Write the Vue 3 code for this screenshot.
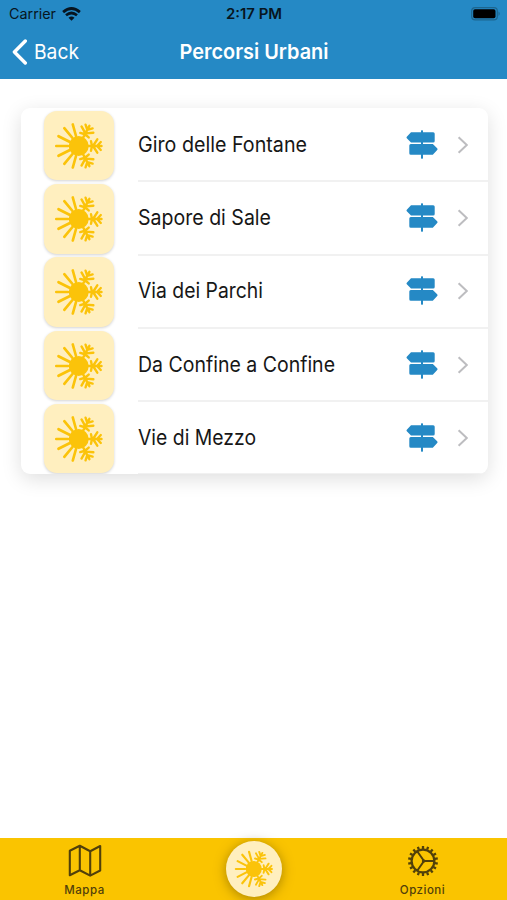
<script setup>
import { h } from 'vue'

const routes = [
  { name: 'Giro delle Fontane', width: 169 },
  { name: 'Sapore di Sale', width: 133 },
  { name: 'Via dei Parchi', width: 125 },
  { name: 'Da Confine a Confine', width: 197 },
  { name: 'Vie di Mezzo', width: 118 }
]

const branch = 'M43 35H57.5M49 35L53.3 28.3M49 35L53.3 41.7M48 35L47 30.2M48 35L47 39.8M53 35L56.8 31M53 35L56.8 39'

// Half sun, half snowflake emblem
const SunSnow = () =>
  h('svg', { viewBox: '0 0 70 70', fill: 'none', stroke: '#fbc30a', 'stroke-linecap': 'round' }, [
    h('circle', { cx: 34.7, cy: 35, r: 10, fill: '#fbc30a', stroke: 'none' }),
    h('path', {
      'stroke-width': 2.7,
      d: 'M12.3 35H24M14.5 25.2L25.5 30.8M20.3 17.2L28.5 27M28.8 13.5L32 25M14.5 44.8L25.5 39.2M20.3 52.8L28.5 43M28.8 56.5L32 45'
    }),
    ...[-62, 0, 62].map((a) =>
      h('path', { d: branch, 'stroke-width': 2.4, transform: `rotate(${a} 34.7 35)` })
    )
  ])

const teeth = Array.from({ length: 18 }, (_, i) => i * 20)
</script>

<template>
  <div class="screen">
    <header>
      <div class="status">
        <div class="carrier">
          <svg class="small" width="48" height="18"><text x="0" y="13.7" textLength="47" lengthAdjust="spacingAndGlyphs">Carrier</text></svg>
          <svg width="19" height="14" viewBox="0 0 19 14" fill="none" stroke="#071520">
            <path d="M1.1 5.1Q9.5-2 17.9 5.1" stroke-width="2.8" />
            <path d="M4 8.3Q9.5 3.7 15 8.3" stroke-width="2.7" />
            <path d="M6.5 10.7Q9.5 8.2 12.5 10.7L9.5 13.8Z" fill="#071520" stroke="none" />
          </svg>
        </div>
        <svg class="small time" width="56" height="18"><text x="0" y="13.7" textLength="56" lengthAdjust="spacingAndGlyphs">2:17 PM</text></svg>
        <svg class="battery" width="30" height="14" viewBox="0 0 30 14">
          <rect x=".7" y=".7" width="25.6" height="12.2" rx="3.4" fill="none" stroke="#1d668f" stroke-width="1.2" />
          <rect x="2.2" y="2.3" width="22.3" height="9" rx="1.8" fill="#000" />
          <path d="M27.5 4.6Q30 6.8 27.5 9Z" fill="#1d668f" />
        </svg>
      </div>
      <nav>
        <div class="back">
          <svg width="16" height="26" viewBox="0 0 16 26" fill="none" stroke="#fff" stroke-width="3.4" stroke-linecap="round" stroke-linejoin="round">
            <path d="M13.3 2L2.4 13L13.3 24" />
          </svg>
          <svg class="label" width="48" height="32"><text x="0" y="23.2" textLength="45" lengthAdjust="spacingAndGlyphs">Back</text></svg>
        </div>
        <svg class="title" width="152" height="32"><text x="1.5" y="23.2" textLength="149" lengthAdjust="spacingAndGlyphs">Percorsi Urbani</text></svg>
      </nav>
    </header>

    <main>
      <ul>
        <li v-for="r in routes" :key="r.name">
          <div class="tile"><SunSnow /></div>
          <div class="row">
            <svg class="name" width="230" height="30"><text x="0" y="22.3" :textLength="r.width" lengthAdjust="spacingAndGlyphs">{{ r.name }}</text></svg>
            <svg class="sign" width="32" height="30" viewBox="0 0 32 30" fill="#2589c5">
              <path d="M15 .5Q16 0 17 .5V2.3H27.2Q28.7 2.3 28.7 3.8V11.1Q28.7 12.6 27.2 12.6H17V14.1H26.8L31.2 18.3Q32 19.2 31.2 20.1L26.8 24.8H17V28.2Q16 29.4 15 28.2V24.8H4.8Q3.3 24.8 3.3 23.3V15.6Q3.3 14.1 4.8 14.1H15V12.6H5L.8 8.3Q.1 7.5 .8 6.7L5 2.3H15Z" />
            </svg>
            <svg class="chevron" width="12" height="18" viewBox="0 0 12 18" fill="none" stroke="#bdbdc0" stroke-width="2">
              <path d="M1.6 1.2L9.8 9L1.6 16.8" />
            </svg>
          </div>
        </li>
      </ul>
    </main>

    <footer>
      <div class="tab">
        <svg width="34" height="34" viewBox="0 0 34 34" fill="none" stroke="#51400a" stroke-width="2.1" stroke-linejoin="round">
          <path d="M1.8 6.8L11.8 1.8L22.2 7.2L32.2 2V26.5L22.2 31.6L11.8 26.2L1.8 31.2ZM11.8 1.8V26.2M22.2 7.2V31.6" />
        </svg>
        <span>Mappa</span>
      </div>
      <div class="home"><SunSnow /></div>
      <div class="tab">
        <svg width="34" height="34" viewBox="-17 -17 34 34" fill="none" stroke="#51400a">
          <circle r="11.4" stroke-width="2.2" />
          <path v-for="a in teeth" :key="a" d="M0-12V-15" stroke-width="2.3" :transform="`rotate(${a})`" />
          <path d="M1 0H11M1 0L-5.8-9.8M1 0L-5.8 9.8" stroke-width="2" />
          <circle cx=".6" r="1.8" fill="#51400a" stroke="none" />
        </svg>
        <span>Opzioni</span>
      </div>
    </footer>
  </div>
</template>

<style>
body {
  margin: 0;
  background: #fff;
}
</style>

<style scoped>
.screen {
  display: flex;
  flex-direction: column;
  width: 507px;
  height: 900px;
  overflow: hidden;
  background: #fff;
  font-family: Inter, "Liberation Sans", sans-serif;
}
svg {
  display: block;
  flex: none;
}
header {
  height: 79px;
  background: #2589c5;
  color: #071520;
}
.status {
  display: grid;
  grid-template-columns: 1fr auto 1fr;
  align-items: center;
  height: 27px;
  padding: 0 6px 0 9px;
}
.small text {
  fill: #071520;
  font-size: 14px;
}
.time text {
  font-weight: 600;
}
.time {
  margin-right: 3px;
}
.carrier {
  display: flex;
  align-items: center;
  gap: 5px;
}
.battery {
  justify-self: end;
}
nav {
  display: grid;
  grid-template-columns: 1fr auto 1fr;
  align-items: center;
  height: 50px;
  padding: 0 12px;
}
.back {
  display: flex;
  align-items: center;
  gap: 5.5px;
}
.label text,
.title text {
  fill: #fff;
  font-size: 20.5px;
}
.title text {
  font-weight: 600;
}
main {
  flex: 1;
  padding: 29px 19px 0 20.5px;
}
ul {
  list-style: none;
  margin: 0;
  padding: 0;
  overflow: hidden;
  border-radius: 9px;
  background: #fff;
  box-shadow: 0 5px 20px rgba(0, 0, 0, 0.13);
}
li {
  display: flex;
  height: 73.3px;
  padding-left: 23.5px;
}
.tile {
  box-sizing: border-box;
  width: 70px;
  height: 69.5px;
  margin-top: 2.8px;
  border-radius: 13px;
  background: #ffefbf;
  box-shadow: 0 1px 3px rgba(0, 0, 0, 0.18);
}
.row {
  display: flex;
  flex: 1;
  align-items: center;
  box-sizing: border-box;
  height: 74.3px;
  margin-left: 24px;
  padding: 1px 19px 0 0;
  border-bottom: 2px solid #f1f1f1;
}
.name {
  flex: 1;
}
.name text {
  font-size: 21px;
  fill: #171717;
}
.sign {
  margin-right: 19px;
}
footer {
  display: grid;
  grid-template-columns: repeat(3, 1fr);
  height: 62px;
  background: #fac400;
}
.tab {
  display: flex;
  flex-direction: column;
  align-items: center;
  padding-top: 6px;
  font-size: 11.5px;
  font-weight: 500;
  line-height: 15px;
  letter-spacing: 0.5px;
  color: #51400a;
}
.tab span {
  margin-top: 4.5px;
}
.home {
  justify-self: center;
  width: 56px;
  height: 56px;
  margin-top: 3px;
  border-radius: 50%;
  background: #ffefbf;
  box-shadow: 0 2px 12px rgba(90, 65, 0, 0.5);
}
</style>
